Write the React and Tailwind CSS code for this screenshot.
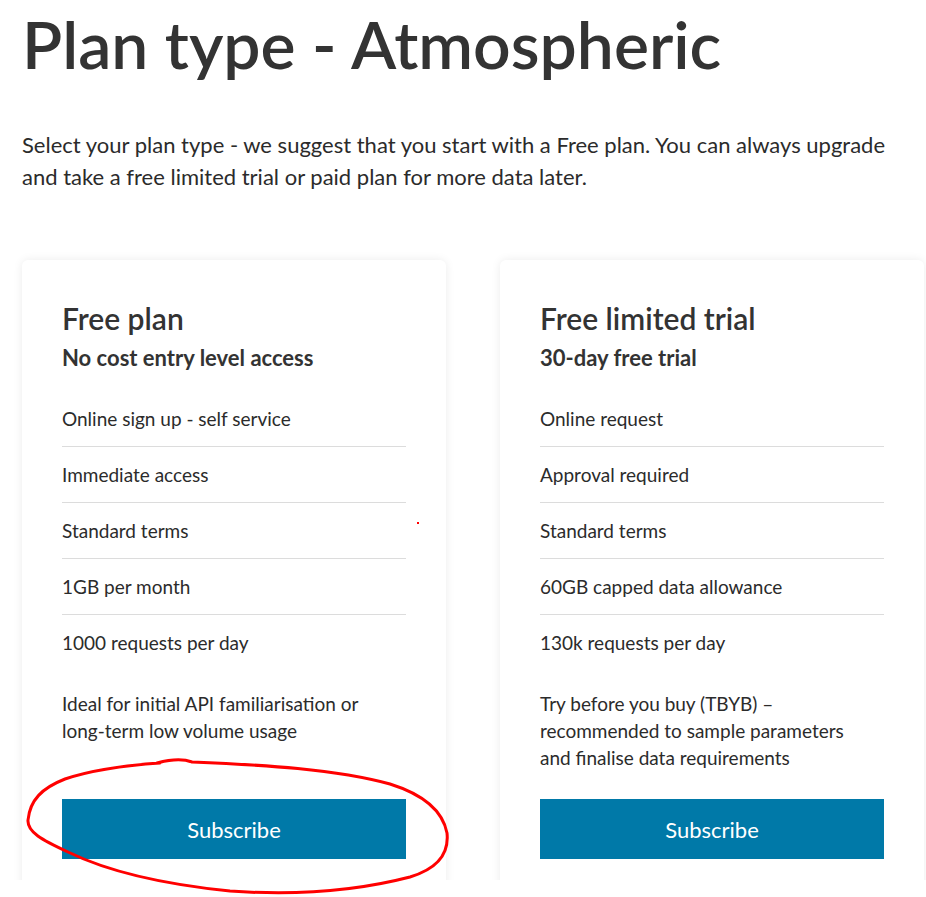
import React from "react";

const plans = [
  {
    title: "Free plan",
    subtitle: "No cost entry level access",
    features: [
      "Online sign up - self service",
      "Immediate access",
      "Standard terms",
      "1GB per month",
      "1000 requests per day",
    ],
    description: (
      <>
        Ideal for initial API familiarisation or <span className="whitespace-nowrap">long-term</span> low volume
        usage
      </>
    ),
  },
  {
    title: "Free limited trial",
    subtitle: "30-day free trial",
    features: [
      "Online request",
      "Approval required",
      "Standard terms",
      "60GB capped data allowance",
      "130k requests per day",
    ],
    description: "Try before you buy (TBYB) – recommended to sample parameters and finalise data requirements",
  },
];

const PlanCard = ({ plan }) => {
  return (
    <section className="flex flex-col w-[424px] rounded-[6px] bg-white px-10 pt-[38px] pb-10 shadow-[0_0_10px_rgba(0,0,0,0.08)]">
      <h2 className="text-[30px] leading-[40px] font-semibold text-[#333]">{plan.title}</h2>
      <h3 className="mt-[3px] text-[22px] leading-[34px] font-bold text-[#333]">{plan.subtitle}</h3>

      <ul className="mt-[16px] flex flex-col">
        {plan.features.map((item, i) => (
          <li
            key={item}
            className={`py-[14px] text-[19px] leading-[27px] text-[#2b2b2b] ${
              i < plan.features.length - 1 ? "border-b border-[#dcdcdc]" : ""
            }`}
          >
            {item}
          </li>
        ))}
      </ul>

      <p className="mt-[20px] mb-[28px] max-w-[330px] text-[19px] leading-[27px] text-[#2b2b2b]">
        {plan.description}
      </p>

      <button
        type="button"
        className="mt-auto flex h-[60px] w-full items-center justify-center bg-[#0079a8] text-[22px] text-white"
      >
        Subscribe
      </button>
    </section>
  );
};

// red scribble somebody drew over the screenshot
const Annotation = () => (
  <svg className="pointer-events-none absolute left-0 top-0" width="926" height="897" viewBox="0 0 926 897" fill="none">
    <path
      d="M157 763 C 172 759 184 759 192 762 C 265 765 335 769 390 784 C 425 795 443 812 447 833 C 449 852 440 868 410 877 C 360 890 300 896 230 891 C 160 884 105 870 68 852 C 42 840 27 832 28 820 C 30 800 42 788 65 779 C 95 769 130 765 160 763"
      stroke="#ff0000"
      strokeWidth="3"
      strokeLinecap="round"
    />
    <rect x="417" y="522" width="2" height="2" fill="#ff0000" />
  </svg>
);

const App = () => {
  return (
    <div className="relative h-[897px] w-[926px] overflow-hidden bg-white" style={{ fontFamily: "Lato, 'Open Sans', sans-serif" }}>
      <div className="h-[880px] overflow-hidden pl-[22px]">
        <h1 className="mt-[4px] text-[66px] leading-[80px] font-semibold text-[#333]">Plan type - Atmospheric</h1>

        <p className="mt-[45px] w-[890px] text-[22px] leading-[32px] text-[#2b2b2b]">
          Select your plan type - we suggest that you start with a Free plan. You can always upgrade and take a
          free limited trial or paid plan for more data later.
        </p>

        <div className="mt-[67px] flex gap-[54px] items-stretch">
          {plans.map((plan) => (
            <PlanCard key={plan.title} plan={plan} />
          ))}
        </div>
      </div>
      <Annotation />
    </div>
  );
};

export default App;
